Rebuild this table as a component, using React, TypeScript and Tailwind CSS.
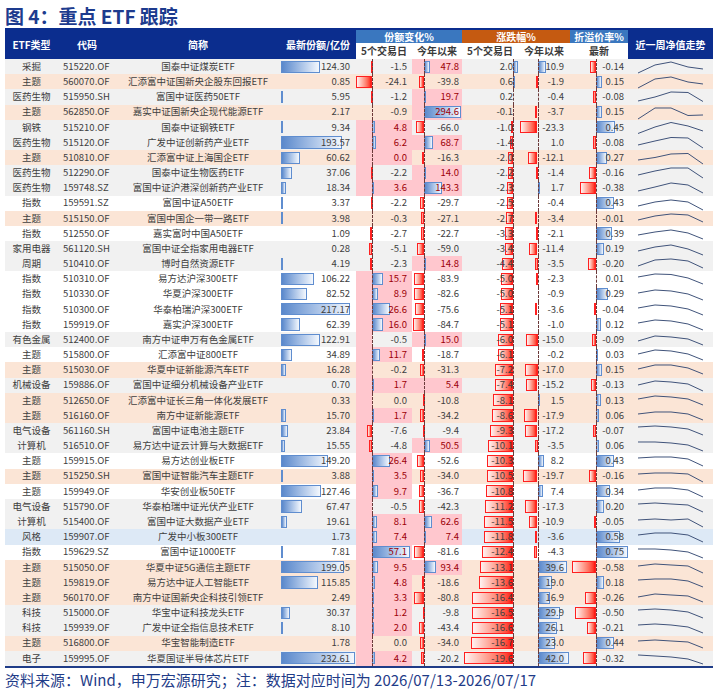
import React from "react";

const RAW = `采掘|515220.OF|国泰中证煤炭ETF|124.30|-1.5|47.8|2.0|10.9|-0.14|g|N
主题|560070.OF|汇添富中证国新央企股东回报ETF|0.85|-24.1|-39.8|0.6|-1.9|0.15|p|N
医药生物|515950.SH|富国中证医药50ETF|5.95|-1.2|19.7|0.2|-0.4|-0.08|g|N
主题|562850.OF|嘉实中证国新央企现代能源ETF|2.17|-0.9|294.6|-0.1|-3.7|0.15|p|N
钢铁|515210.OF|国泰中证钢铁ETF|9.34|4.8|-66.0|-1.0|-23.3|0.45|g|F
医药生物|515120.OF|广发中证创新药产业ETF|193.57|6.2|68.7|-1.4|1.0|-0.08|g|F
主题|510810.OF|汇添富中证上海国企ETF|60.62|0.0|-16.3|-2.0|-12.1|0.27|p|F
医药生物|512290.OF|国泰中证生物医药ETF|37.06|-2.2|14.0|-2.2|-1.4|-0.16|g|S
医药生物|159748.SZ|富国中证沪港深创新药产业ETF|18.34|3.6|143.3|-2.3|1.7|-0.38|g|F
指数|159591.SZ|富国中证A50ETF|3.37|-2.2|-29.7|-2.5|-0.4|0.43|w|N
主题|515150.OF|富国中国企一带一路ETF|3.98|-0.3|-27.1|-2.7|-3.4|-0.01|p|N
指数|512550.OF|嘉实富时中国A50ETF|1.09|-2.7|-22.7|-3.3|-2.1|0.39|w|N
家用电器|561120.SH|富国中证全指家用电器ETF|0.28|-5.1|-59.0|-3.4|-11.4|0.19|g|N
周期|510410.OF|博时自然资源ETF|4.19|-2.3|14.8|-4.4|-3.5|-0.20|g|N
指数|510310.OF|易方达沪深300ETF|106.22|15.7|-83.9|-5.0|-2.3|0.01|w|F
指数|510330.OF|华夏沪深300ETF|82.52|8.9|-82.6|-5.0|-0.9|0.29|w|F
指数|510300.OF|华泰柏瑞沪深300ETF|217.17|26.6|-75.6|-5.1|-3.6|-0.04|w|F
指数|159919.OF|嘉实沪深300ETF|62.39|16.0|-84.7|-5.1|-1.0|0.12|w|F
有色金属|512400.OF|南方中证申万有色金属ETF|122.91|-0.5|15.0|-6.0|-15.0|-0.09|g|S
主题|515800.OF|汇添富中证800ETF|34.89|11.7|-18.7|-6.1|-0.2|0.03|w|F
主题|515030.OF|华夏中证新能源汽车ETF|16.28|-0.2|-31.3|-7.2|-17.0|0.15|p|S
机械设备|159886.OF|富国中证细分机械设备产业ETF|0.70|1.7|5.4|-7.4|-15.2|-0.13|g|F
主题|512650.OF|汇添富中证长三角一体化发展ETF|0.33|0.0|-10.8|-8.1|1.5|0.13|p|S
主题|516160.OF|南方中证新能源ETF|15.70|1.7|-34.2|-8.6|-17.9|0.06|p|F
电气设备|561160.SH|富国中证电池主题ETF|23.84|-7.6|-9.4|-9.3|-17.2|-0.07|g|S
计算机|516510.OF|易方达中证云计算与大数据ETF|15.55|-4.8|50.5|-10.1|-3.5|0.06|g|S
主题|159915.OF|易方达创业板ETF|149.20|26.4|-52.6|-10.3|8.2|0.43|w|F
主题|515250.SH|富国中证智能汽车主题ETF|3.88|3.5|-34.0|-10.5|-19.7|-0.16|p|F
主题|159949.OF|华安创业板50ETF|127.46|9.7|-36.7|-10.8|7.4|0.34|w|F
电气设备|515790.OF|华泰柏瑞中证光伏产业ETF|67.47|-0.5|-42.3|-11.2|-17.3|0.20|g|S
计算机|515400.OF|富国中证大数据产业ETF|19.61|8.1|62.6|-11.5|-10.9|-0.05|g|F
风格|159907.OF|广发中小板300ETF|1.73|7.4|7.4|-11.8|-3.6|0.58|b|F
指数|159629.SZ|富国中证1000ETF|7.81|57.1|-81.6|-12.4|-4.3|0.75|w|F
主题|515050.OF|华夏中证5G通信主题ETF|199.05|9.5|93.4|-13.1|39.6|-0.58|p|F
主题|159819.OF|易方达中证人工智能ETF|115.85|4.8|-18.6|-13.6|19.0|0.18|p|F
主题|560170.OF|南方中证国新央企科技引领ETF|2.49|3.3|-80.8|-16.4|16.9|-0.26|p|F
科技|515000.OF|华宝中证科技龙头ETF|30.37|1.2|-9.8|-16.5|29.9|-0.50|g|F
科技|159939.OF|广发中证全指信息技术ETF|8.10|2.0|-43.4|-16.6|26.1|-0.21|g|F
主题|516800.OF|华宝智能制造ETF|1.78|0.0|-34.0|-16.7|23.0|0.44|p|S
电子|159995.OF|华夏国证半导体芯片ETF|232.61|4.2|-20.2|-19.6|42.0|-0.32|g|F`;

const SPARK: number[][] = [
  [14, 6, 3, 8, 10],
  [14, 5, 3, 8, 10],
  [12, 8, 3, 3.5, 12.5],
  [14, 3, 3, 10.5, 10],
  [13.5, 7, 2.5, 6, 11],
  [10, 6, 2.5, 3, 13],
  [10, 7.5, 4, 3.5, 14],
  [10, 6, 3, 3, 13],
  [11, 7, 3, 5, 13],
  [10, 6, 4, 6, 14],
  [9, 5, 3, 4, 11],
  [9, 6, 4, 7, 13],
  [10, 6, 4, 8, 14],
  [10, 4, 3, 5, 12],
  [6, 3, 3.5, 7, 13],
  [6, 3, 4, 7, 13],
  [6, 3, 4, 7, 13],
  [6, 3, 4, 7, 13],
  [9, 4, 5, 7, 13],
  [7, 3, 4, 7, 13],
  [7, 3, 3, 6, 12],
  [7, 3, 4, 6, 13],
  [6, 3, 4, 6, 12],
  [6, 4, 4, 6, 12],
  [4, 3, 4, 6, 12],
  [4, 4, 5, 7, 13],
  [5, 4, 4, 6, 13],
  [5, 4, 4, 5, 13],
  [6, 4, 4, 6, 13],
  [5, 4, 5, 6, 13],
  [6, 5, 6, 5, 13],
  [6, 4, 4, 6, 13],
  [4, 4, 5, 7, 13],
  [6, 4, 5, 6, 13],
  [5, 4, 4, 6, 12],
  [7, 4, 5, 6, 12],
  [5, 4, 5, 7, 13],
  [5, 4, 5, 7, 13],
  [5, 4, 5, 6, 12],
  [4, 5, 6, 8, 13],
];

type Row = {
  type: string;
  code: string;
  name: string;
  share: string;
  c5: string;
  cy: string;
  r5: string;
  ry: string;
  prem: string;
  bg: string;
  fill: string;
};

const ROWS: Row[] = RAW.split("\n").map((l) => {
  const p = l.split("|");
  return {
    type: p[0],
    code: p[1],
    name: p[2],
    share: p[3],
    c5: p[4],
    cy: p[5],
    r5: p[6],
    ry: p[7],
    prem: p[8],
    bg: p[9],
    fill: p[10],
  };
});

const BG: Record<string, string> = {
  g: "bg-[#f1f1f1]",
  p: "bg-[#fbe5d6]",
  w: "bg-white",
  b: "bg-[#dde9f6]",
};

function DataBar({ v, axis, scale }: { v: number; axis: number; scale: number }) {
  const w = Math.abs(v) * scale;
  if (w < 0.8) return null;
  if (v > 0) {
    return (
      <div
        className="absolute top-[1.5px] bottom-[1.5px] border border-[#5f8dcf] bg-linear-to-r from-[#5a88cb] to-[#f4f8fd]"
        style={{ left: axis, width: w }}
      />
    );
  }
  return (
    <div
      className="absolute top-[1.5px] bottom-[1.5px] border border-[#ff2020] bg-linear-to-r from-[#fff2f2] to-[#ff0000]"
      style={{ left: axis - w, width: w }}
    />
  );
}

function Axis({ x }: { x: number }) {
  return (
    <div
      className="absolute top-0 bottom-0 w-0 border-l border-dashed border-[#6b3a3a]"
      style={{ left: x }}
    />
  );
}

function Spark({ pts }: { pts: number[] }) {
  const xs = [10, 27, 43, 60, 75];
  const d = pts.map((y, i) => `${xs[i]},${y}`).join(" ");
  return (
    <svg width="85" height="15.175" viewBox="0 0 85 15.175" className="block">
      <polyline points={d} fill="none" stroke="#3f5279" strokeWidth="1" strokeLinejoin="round" />
    </svg>
  );
}

function DataRow({ r, i }: { r: Row; i: number }) {
  const c5 = parseFloat(r.c5);
  const cy = parseFloat(r.cy);
  const c5red = r.fill === "F";
  const cyPos = cy > 0;
  return (
    <div className={`flex h-[15.175px] text-[9.5px] leading-none text-[#404040] ${BG[r.bg]}`}>
      <div className="w-[53px] shrink-0 flex items-center justify-center">{r.type}</div>
      <div className="w-[58px] shrink-0 flex items-center pl-[5px]">{r.code}</div>
      <div className="w-[164px] shrink-0 flex items-center justify-center whitespace-nowrap">{r.name}</div>
      <div className="relative w-[76px] shrink-0 flex items-center justify-end pr-[6px]">
        <DataBar v={parseFloat(r.share)} axis={0.5} scale={0.32} />
        <span className="relative">{r.share}</span>
      </div>
      <div
        className={`relative w-[56px] shrink-0 flex items-center justify-end pr-[5px] ${
          r.fill === "F" ? "bg-[#ffc7ce] text-[#9c0006]" : ""
        }`}
      >
        {r.fill === "S" && <div className="absolute left-0 top-0 bottom-0 w-[16px] bg-[#ffc7ce]" />}
        <DataBar v={c5} axis={16} scale={0.67} />
        <Axis x={16} />
        <span className="relative">{r.c5}</span>
      </div>
      <div
        className={`relative w-[50px] shrink-0 flex items-center justify-end pr-[3px] ${
          cyPos ? "bg-[#ffc7ce] text-[#9c0006]" : ""
        }`}
      >
        <DataBar v={cy} axis={12} scale={0.125} />
        <Axis x={12} />
        <span className="relative">{r.cy}</span>
      </div>
      <div className="relative w-[56px] shrink-0 flex items-center justify-end pr-[5px]">
        <DataBar v={parseFloat(r.r5)} axis={51} scale={2.5} />
        <Axis x={51} />
        <span className="relative">{r.r5}</span>
      </div>
      <div className="relative w-[52px] shrink-0 flex items-center justify-end pr-[6px]">
        <DataBar v={parseFloat(r.ry)} axis={19.5} scale={0.75} />
        <Axis x={19.5} />
        <span className="relative">{r.ry}</span>
      </div>
      <div className="relative w-[58px] shrink-0 flex items-center justify-end pr-[4px]">
        <DataBar v={parseFloat(r.prem)} axis={26} scale={42} />
        <Axis x={26} />
        <span className="relative">{r.prem}</span>
      </div>
      <div className="w-[85px] shrink-0 flex items-center">
        <Spark pts={SPARK[i]} />
      </div>
      {c5red ? null : null}
    </div>
  );
}

export default function App() {
  return (
    <div className="w-[719px] h-[697px] bg-white font-['Noto_Sans_CJK_SC','Noto_Sans',sans-serif] overflow-hidden">
      <div className="h-[28px] pl-[5px] pt-[3px] flex items-center text-[19px] font-bold text-[#1d3b8e] leading-none">
        图 4：重点 ETF 跟踪
      </div>
      <div className="ml-[5px] w-[708px]">
        <div className="flex h-[31px] border-t-2 border-[#0b2d8e] bg-[#0b2d8e] text-[10px] font-bold leading-none">
          <div className="w-[53px] flex items-center justify-center text-white">ETF类型</div>
          <div className="w-[58px] flex items-center justify-center text-white">代码</div>
          <div className="w-[164px] flex items-center justify-center text-white">简称</div>
          <div className="w-[76px] flex items-center justify-center text-white">最新份额/亿份</div>
          <div className="w-[106px] flex flex-col">
            <div className="h-[13px] bg-[#3a77bf] text-white flex items-center justify-center">份额变化%</div>
            <div className="h-[16px] bg-white text-[#3a3a3a] flex">
              <div className="w-[56px] flex items-center justify-center">5个交易日</div>
              <div className="w-[50px] flex items-center justify-center">今年以来</div>
            </div>
          </div>
          <div className="w-[108px] flex flex-col">
            <div className="h-[13px] bg-[#c55a11] text-white flex items-center justify-center">涨跌幅%</div>
            <div className="h-[16px] bg-white text-[#3a3a3a] flex">
              <div className="w-[56px] flex items-center justify-center">5个交易日</div>
              <div className="w-[52px] flex items-center justify-center">今年以来</div>
            </div>
          </div>
          <div className="w-[58px] flex flex-col">
            <div className="h-[13px] bg-[#3a77bf] text-white flex items-center justify-center">折溢价率%</div>
            <div className="h-[16px] bg-white text-[#3a3a3a] flex items-center justify-center">最新</div>
          </div>
          <div className="w-[85px] flex items-center justify-center text-white">近一周净值走势</div>
        </div>
        {ROWS.map((r, i) => (
          <DataRow key={i} r={r} i={i} />
        ))}
        <div className="h-[2px] bg-[#1f3c88]" />
      </div>
      <div className="h-[24px] pl-[5px] flex items-center text-[15px] text-[#1f3c88] leading-none whitespace-nowrap">
        资料来源：Wind，申万宏源研究；注：数据对应时间为 2026/07/13-2026/07/17
      </div>
    </div>
  );
}
